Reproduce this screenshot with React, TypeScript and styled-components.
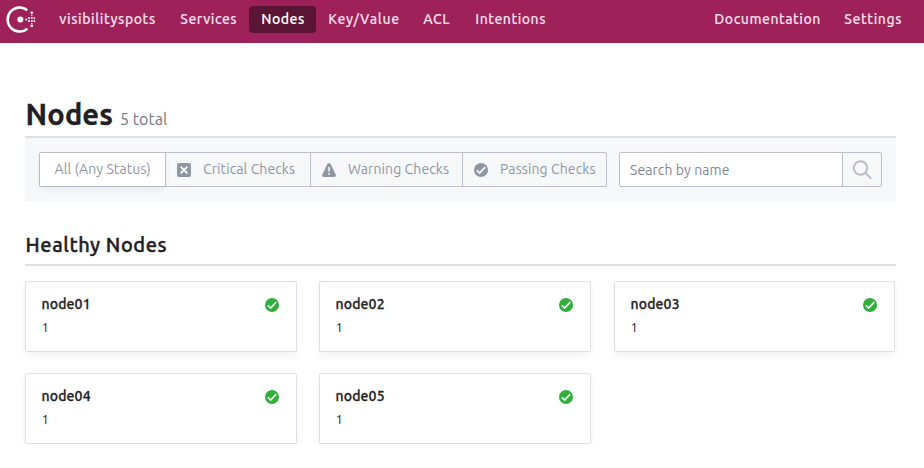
import React from 'react';
import styled, { createGlobalStyle } from 'styled-components';

const GlobalStyle = createGlobalStyle`
  *, *::before, *::after { box-sizing: border-box; }
  body { margin: 0; background: #fff; color: #1f2124; font-family: Ubuntu, 'Noto Sans', sans-serif; }
  h1, h2, h3, p, ul { margin: 0; padding: 0; }
  svg { display: block; flex: none; }
`;

const Header = styled.header`
  display: flex;
  height: 43px;
  padding: 6px 10px 0 6px;
  background: #9e2159;
`;

const Logo = styled.div`
  width: 41px;
`;

const Nav = styled.nav`
  display: flex;
  flex: 1;
`;

const NavLink = styled.a<{ $width: number; $active?: boolean; $push?: boolean; $track?: number }>`
  width: ${p => p.$width}px;
  height: 27px;
  padding-left: 12.3px;
  margin-left: ${p => (p.$push ? 'auto' : '0')};
  border-radius: 4px;
  background: ${p => (p.$active ? '#5a1434' : 'transparent')};
  color: ${p => (p.$active ? '#fff' : '#f5dfe9')};
  font-size: 14px;
  font-weight: 500;
  line-height: 26px;
  letter-spacing: ${p => p.$track ?? 0.52}px;
  -webkit-text-stroke: 0.15px currentColor;
  white-space: nowrap;
`;

const Main = styled.main`
  width: 871px;
  margin-left: 25px;
`;

const TitleRow = styled.div`
  display: flex;
  align-items: baseline;
  height: 95px;
  padding: 51px 0 0 0.6px;
  border-bottom: 2px solid #dce0e6;
  white-space: nowrap;
`;

const Title = styled.h1`
  width: 94.4px;
  font-size: 29px;
  font-weight: 700;
  line-height: 41px;
  letter-spacing: 0.1px;
  -webkit-text-stroke: 0.3px currentColor;
`;

const Total = styled.span`
  color: #6f7682;
  font-size: 16px;
  letter-spacing: 0.05px;
`;

const FilterBar = styled.form`
  display: flex;
  gap: 12px;
  height: 63px;
  padding: 14px 14px 0;
  background: #f7f8fa;
`;

const FilterGroup = styled.div`
  display: flex;
  width: 568px;
  height: 35px;
  border: 1px solid #bac1cc;
  border-radius: 2px;
`;

const Filter = styled.div<{ $width: number; $selected?: boolean }>`
  display: flex;
  align-items: center;
  gap: 12px;
  width: ${p => p.$width}px;
  padding-left: ${p => (p.$selected ? 14.5 : 11)}px;
  border-right: 1px solid #bac1cc;
  background: ${p => (p.$selected ? '#fff' : 'transparent')};
  box-shadow: ${p => (p.$selected ? '0 4px 8px rgba(0, 0, 0, 0.05)' : 'none')};
  color: #8e96a3;
  font-size: 14px;
  line-height: 33px;
  letter-spacing: 0.1px;
  white-space: nowrap;
  &:last-child { border-right: 0; }
`;

const FilterLabel = styled.span`
  margin-bottom: 1px;
`;

const Search = styled.div`
  display: flex;
  width: 263px;
  height: 35px;
  border: 1px solid #bac1cc;
  border-radius: 2px;
`;

const SearchInput = styled.input`
  width: 223px;
  padding: 0 10px;
  border: 0;
  border-right: 1px solid #bac1cc;
  background: #fff;
  font: 14px Ubuntu, 'Noto Sans', sans-serif;
  letter-spacing: 0.08px;
  &::placeholder { color: #7f8794; opacity: 1; }
`;

const SearchButton = styled.div`
  display: flex;
  align-items: center;
  justify-content: center;
  flex: 1;
`;

const SectionTitle = styled.h2`
  height: 65px;
  padding: 29px 0 0 0.6px;
  border-bottom: 2px solid #dce0e6;
  font-size: 20px;
  font-weight: 500;
  line-height: 30px;
  letter-spacing: 0.56px;
  -webkit-text-stroke: 0.4px currentColor;
`;

const CardGrid = styled.ul`
  display: grid;
  grid-template-columns: 294px 295px 281px;
  grid-auto-rows: 71px;
  row-gap: 21px;
  padding-top: 15px;
  list-style: none;
`;

const Card = styled.li`
  display: flex;
  justify-content: space-between;
  width: 272px;
  padding: 12px 17px 0 15.5px;
  border: 1px solid #dce0e6;
  border-radius: 2px;
  box-shadow: 0 4px 8px rgba(0, 0, 0, 0.05);
  &:nth-child(3n) { width: 281px; }
  > svg { margin-top: 4px; }
`;

const NodeName = styled.h3`
  font-size: 14px;
  font-weight: 500;
  line-height: 20px;
  letter-spacing: 0.15px;
  -webkit-text-stroke: 0.3px currentColor;
`;

const Count = styled.p`
  margin-top: 4px;
  font-size: 13px;
  line-height: 19px;
`;

const CheckIcon = ({ color }: { color: string }) => (
  <svg width="14" height="14" viewBox="0 0 14 14">
    <circle cx="7" cy="7" r="7" fill={color} />
    <path d="M2.8 7.2 5.6 10 11.2 4.1" fill="none" stroke="#fff" strokeWidth="1.6" />
  </svg>
);

const CrossIcon = () => (
  <svg width="14" height="14" viewBox="0 0 14 14">
    <rect width="14" height="14" rx="2" fill="#8e96a3" />
    <path d="m3.7 3.7 6.6 6.6m0-6.6-6.6 6.6" stroke="#fff" strokeWidth="1.9" />
  </svg>
);

const WarningIcon = () => (
  <svg width="14" height="14" viewBox="0 0 14 14">
    <path d="M5.5.8Q7-.7 8.5.8L13.8 11.7Q14.3 14 12.4 14H1.6Q-.3 14 .2 11.7Z" fill="#8e96a3" />
    <path d="M7 4v4.5M7 10v1.7" stroke="#fff" strokeWidth="1.5" />
  </svg>
);

const SearchIcon = () => (
  <svg width="20" height="20" viewBox="0 0 20 20" fill="none" stroke="#b5bcc8" strokeWidth="1.9">
    <circle cx="8.5" cy="8" r="6.7" />
    <path d="m13.2 12.7 6 6" />
  </svg>
);

const dots = [
  [19.7, 13.5, 1], [22.5, 12.1, 1], [22.5, 15, 1], [25.3, 6.8, 1.3], [25.3, 9.3, 0.7],
  [25.3, 12.1, 1], [25.3, 15, 1], [25.3, 17.4, 0.7], [25.3, 19.8, 1.35], [27.8, 12.1, 0.9], [27.8, 15, 0.9],
];

const ConsulLogo = () => (
  <svg width="30" height="27" viewBox="0 0 30 27" fill="#fff">
    <g transform="translate(0.5 0)">
      <path d="M20.9 4.4A11.9 12.1 0 1 0 20.9 22.6" fill="none" stroke="#fff" strokeWidth="2.5" />
      <circle cx="13.8" cy="13.5" r="3" />
      {dots.map(([cx, cy, r]) => <circle key={`${cx}-${cy}`} cx={cx} cy={cy} r={r} />)}
    </g>
  </svg>
);

const nodes = ['node01', 'node02', 'node03', 'node04', 'node05'];

export default function App() {
  return (
    <>
      <GlobalStyle />
      <Header>
        <Logo><ConsulLogo /></Logo>
        <Nav>
          <NavLink $width={121} $track={0.58}>visibilityspots</NavLink>
          <NavLink $width={81}>Services</NavLink>
          <NavLink $width={67} $active>Nodes</NavLink>
          <NavLink $width={95} $track={0.68}>Key/Value</NavLink>
          <NavLink $width={52}>ACL</NavLink>
          <NavLink $width={95}>Intentions</NavLink>
          <NavLink $width={130} $push>Documentation</NavLink>
          <NavLink $width={82} $track={0.6}>Settings</NavLink>
        </Nav>
      </Header>
      <Main>
        <TitleRow>
          <Title>Nodes</Title>
          <Total>5 total</Total>
        </TitleRow>
        <FilterBar>
          <FilterGroup>
            <Filter $width={126} $selected><FilterLabel>All (Any Status)</FilterLabel></Filter>
            <Filter $width={145}><CrossIcon /><FilterLabel>Critical Checks</FilterLabel></Filter>
            <Filter $width={152}><WarningIcon /><FilterLabel>Warning Checks</FilterLabel></Filter>
            <Filter $width={143}><CheckIcon color="#8e96a3" /><FilterLabel>Passing Checks</FilterLabel></Filter>
          </FilterGroup>
          <Search>
            <SearchInput placeholder="Search by name" />
            <SearchButton><SearchIcon /></SearchButton>
          </Search>
        </FilterBar>
        <SectionTitle>Healthy Nodes</SectionTitle>
        <CardGrid>
          {nodes.map(name => (
            <Card key={name}>
              <div>
                <NodeName>{name}</NodeName>
                <Count>1</Count>
              </div>
              <CheckIcon color="#2eb039" />
            </Card>
          ))}
        </CardGrid>
      </Main>
    </>
  );
}
